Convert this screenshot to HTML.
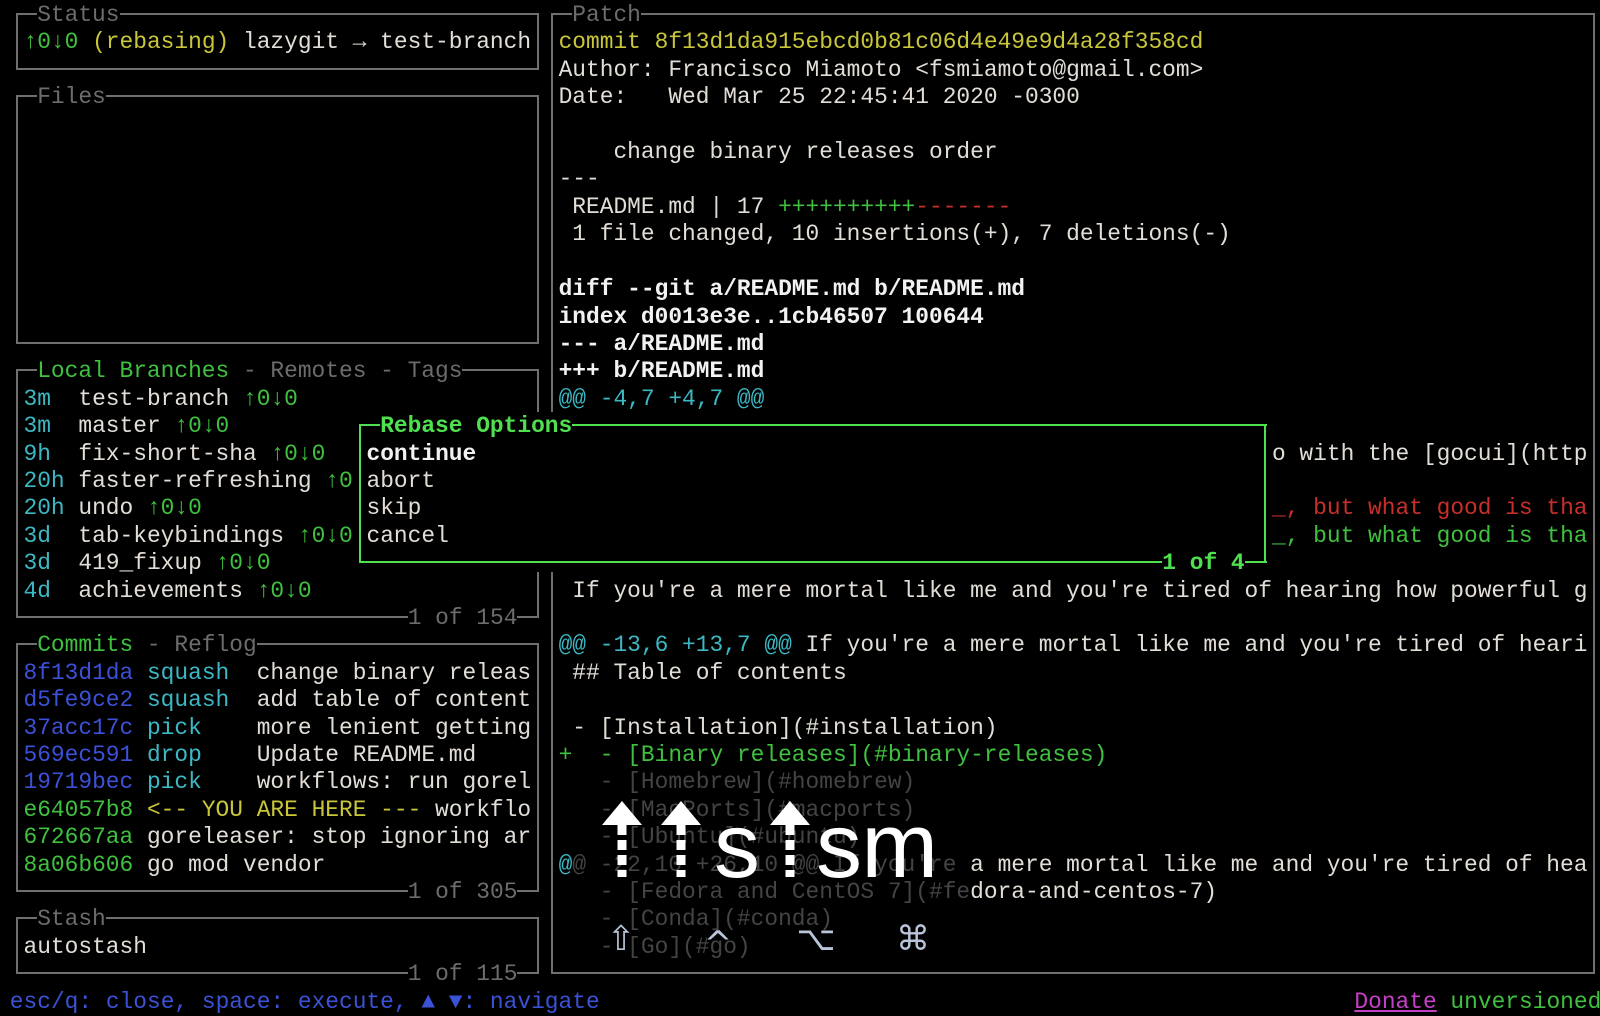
<!DOCTYPE html>
<html><head><meta charset="utf-8"><style>
html,body{margin:0;padding:0;background:#000;}
body{width:1600px;height:1014px;position:relative;overflow:hidden;}
.t{position:absolute;white-space:pre;font-family:"Liberation Mono","DejaVu Sans Mono",monospace;font-size:22.87px;line-height:27.4px;height:27.4px;color:#e2ddd6;margin-top:2px;}
.h{position:absolute;height:2px;background:#6f6f6f;}
.v{position:absolute;width:2px;background:#6f6f6f;}
.gh{position:absolute;height:2px;background:#4fe04f;}
.gv{position:absolute;width:2px;background:#4fe04f;}
.bk{background:#000;}
.g{color:#3fc03f}.y{color:#c9c63a}.c{color:#3cb8c4}.b{color:#3c50d8}.r{color:#c62f2a}
.d{color:#6c6c6c}.m{color:#c640c6;text-decoration:underline}.w{color:#f2f2f2}
.bd{font-weight:bold}.dim{color:#444}.gb{color:#4fe04f;font-weight:bold}
</style></head><body>

<!-- Status box -->
<div class="h" style="left:16px;top:13px;width:523px"></div>
<div class="h" style="left:16px;top:68px;width:523px"></div>
<div class="v" style="left:16px;top:13px;height:57px"></div>
<div class="v" style="left:537px;top:13px;height:57px"></div>
<!-- Files -->
<div class="h" style="left:16px;top:95px;width:523px"></div>
<div class="h" style="left:16px;top:342px;width:523px"></div>
<div class="v" style="left:16px;top:95px;height:249px"></div>
<div class="v" style="left:537px;top:95px;height:249px"></div>
<!-- Branches -->
<div class="h" style="left:16px;top:369px;width:523px"></div>
<div class="h" style="left:16px;top:616px;width:523px"></div>
<div class="v" style="left:16px;top:369px;height:249px"></div>
<div class="v" style="left:537px;top:369px;height:249px"></div>
<!-- Commits -->
<div class="h" style="left:16px;top:643px;width:523px"></div>
<div class="h" style="left:16px;top:890px;width:523px"></div>
<div class="v" style="left:16px;top:643px;height:249px"></div>
<div class="v" style="left:537px;top:643px;height:249px"></div>
<!-- Stash -->
<div class="h" style="left:16px;top:917px;width:523px"></div>
<div class="h" style="left:16px;top:972px;width:523px"></div>
<div class="v" style="left:16px;top:917px;height:57px"></div>
<div class="v" style="left:537px;top:917px;height:57px"></div>
<!-- Patch -->
<div class="h" style="left:551px;top:13px;width:1044px"></div>
<div class="h" style="left:551px;top:972px;width:1044px"></div>
<div class="v" style="left:551px;top:13px;height:961px"></div>
<div class="v" style="left:1593px;top:13px;height:961px"></div>

<!-- titles -->
<div class="t d bk" style="top:0;left:37.2px">Status</div>
<div class="t d bk" style="top:82.2px;left:37.2px">Files</div>
<div class="t bk" style="top:356.3px;left:37.2px"><span class="g">Local Branches</span><span class="d"> - Remotes - Tags</span></div>
<div class="t d bk" style="top:602.9px;left:407.7px">1 of 154</div>
<div class="t bk" style="top:630.3px;left:37.2px"><span class="g">Commits</span><span class="d"> - Reflog</span></div>
<div class="t d bk" style="top:877px;left:407.7px">1 of 305</div>
<div class="t d bk" style="top:904.4px;left:37.2px">Stash</div>
<div class="t d bk" style="top:959.2px;left:407.7px">1 of 115</div>
<div class="t d bk" style="top:0;left:572.3px">Patch</div>

<!-- status -->
<div class="t" style="top:27.4px;left:23.5px"><span class="g">↑0↓0</span><span class="y"> (rebasing)</span> lazygit → test-branch</div>

<!-- branches -->
<div class="t" style="top:383.7px;left:23.5px"><span class="c">3m</span>  test-branch <span class="g">↑0↓0</span></div>
<div class="t" style="top:411.1px;left:23.5px"><span class="c">3m</span>  master <span class="g">↑0↓0</span></div>
<div class="t" style="top:438.5px;left:23.5px"><span class="c">9h</span>  fix-short-sha <span class="g">↑0↓0</span></div>
<div class="t" style="top:465.9px;left:23.5px"><span class="c">20h</span> faster-refreshing <span class="g">↑0</span></div>
<div class="t" style="top:493.3px;left:23.5px"><span class="c">20h</span> undo <span class="g">↑0↓0</span></div>
<div class="t" style="top:520.7px;left:23.5px"><span class="c">3d</span>  tab-keybindings <span class="g">↑0↓0</span></div>
<div class="t" style="top:548.1px;left:23.5px"><span class="c">3d</span>  419_fixup <span class="g">↑0↓0</span></div>
<div class="t" style="top:575.5px;left:23.5px"><span class="c">4d</span>  achievements <span class="g">↑0↓0</span></div>

<!-- commits -->
<div class="t" style="top:657.7px;left:23.5px"><span class="b">8f13d1da</span> <span class="c">squash</span>  change binary releas</div>
<div class="t" style="top:685.1px;left:23.5px"><span class="b">d5fe9ce2</span> <span class="c">squash</span>  add table of content</div>
<div class="t" style="top:712.5px;left:23.5px"><span class="b">37acc17c</span> <span class="c">pick</span>    more lenient getting</div>
<div class="t" style="top:739.9px;left:23.5px"><span class="b">569ec591</span> <span class="c">drop</span>    Update README.md</div>
<div class="t" style="top:767.3px;left:23.5px"><span class="b">19719bec</span> <span class="c">pick</span>    workflows: run gorel</div>
<div class="t" style="top:794.7px;left:23.5px"><span class="g">e64057b8</span> <span class="y">&lt;-- YOU ARE HERE ---</span> workflo</div>
<div class="t" style="top:822.2px;left:23.5px"><span class="g">672667aa</span> goreleaser: stop ignoring ar</div>
<div class="t" style="top:849.6px;left:23.5px"><span class="g">8a06b606</span> go mod vendor</div>
<div class="t" style="top:931.8px;left:23.5px">autostash</div>

<!-- patch -->
<div class="t y" style="top:27.4px;left:558.6px">commit 8f13d1da915ebcd0b81c06d4e49e9d4a28f358cd</div>
<div class="t" style="top:54.8px;left:558.6px">Author: Francisco Miamoto &lt;fsmiamoto@gmail.com&gt;</div>
<div class="t" style="top:82.2px;left:558.6px">Date:   Wed Mar 25 22:45:41 2020 -0300</div>
<div class="t" style="top:137px;left:558.6px">    change binary releases order</div>
<div class="t" style="top:164.4px;left:558.6px">---</div>
<div class="t" style="top:191.8px;left:558.6px"> README.md | 17 <span class="g">++++++++++</span><span class="r">-------</span></div>
<div class="t" style="top:219.2px;left:558.6px"> 1 file changed, 10 insertions(+), 7 deletions(-)</div>
<div class="t w bd" style="top:274.1px;left:558.6px">diff --git a/README.md b/README.md</div>
<div class="t w bd" style="top:301.5px;left:558.6px">index d0013e3e..1cb46507 100644</div>
<div class="t w bd" style="top:328.9px;left:558.6px">--- a/README.md</div>
<div class="t w bd" style="top:356.3px;left:558.6px">+++ b/README.md</div>
<div class="t c" style="top:383.7px;left:558.6px">@@ -4,7 +4,7 @@</div>
<div class="t" style="top:438.5px;left:1272px">o with the [gocui](http</div>
<div class="t r" style="top:493.3px;left:1272px">_, but what good is tha</div>
<div class="t g" style="top:520.7px;left:1272px">_, but what good is tha</div>
<div class="t" style="top:575.5px;left:558.6px"> If you're a mere mortal like me and you're tired of hearing how powerful g</div>
<div class="t" style="top:630.3px;left:558.6px"><span class="c">@@ -13,6 +13,7 @@</span> If you're a mere mortal like me and you're tired of heari</div>
<div class="t" style="top:657.7px;left:558.6px"> ## Table of contents</div>
<div class="t" style="top:712.5px;left:558.6px"> - [Installation](#installation)</div>
<div class="t g" style="top:739.9px;left:558.6px">+  - [Binary releases](#binary-releases)</div>
<div class="t dim" style="top:767.3px;left:558.6px">   - [Homebrew](#homebrew)</div>
<div class="t dim" style="top:794.7px;left:558.6px">   - [MacPorts](#macports)</div>
<div class="t dim" style="top:822.2px;left:558.6px">   - [Ubuntu](#ubuntu)</div>
<div class="t" style="top:849.6px;left:558.6px"><span class="c">@</span><span class="dim">@ -22,10 +26,10 @@ If you're </span>a mere mortal like me and you're tired of hea</div>
<div class="t" style="top:877px;left:558.6px"><span class="dim">   - [Fedora and CentOS 7](#fe</span>dora-and-centos-7)</div>
<div class="t dim" style="top:904.4px;left:558.6px">   - [Conda](#conda)</div>
<div class="t dim" style="top:931.8px;left:558.6px">   - [Go](#go)</div>

<!-- popup -->
<div style="position:absolute;left:352px;top:412px;width:920px;height:160px;background:#000"></div>
<div class="gh" style="left:359px;top:424px;width:908px"></div>
<div class="gh" style="left:359px;top:561px;width:908px"></div>
<div class="gv" style="left:359px;top:424px;height:139px"></div>
<div class="gv" style="left:1264px;top:424px;height:139px"></div>
<div class="t gb bk" style="top:411.1px;left:380.2px">Rebase Options</div>
<div class="t w bd" style="top:438.5px;left:366.5px">continue</div>
<div class="t" style="top:465.9px;left:366.5px">abort</div>
<div class="t" style="top:493.3px;left:366.5px">skip</div>
<div class="t" style="top:520.7px;left:366.5px">cancel</div>
<div class="t gb bk" style="top:548.1px;left:1162.3px">1 of 4</div>

<!-- status bar -->
<div class="t" style="top:986.6px;left:9.8px;color:#3b52d6">esc/q: close, space: execute, ▲ ▼: navigate</div>
<div class="t" style="top:986.6px;left:1354.4px"><span class="m">Donate</span><span class="g"> unversioned</span></div>

<!-- keystroke overlay -->
<svg style="position:absolute;left:0;top:0" width="1600" height="1014">
<g fill="#fff">
<polygon points="602,825 622,801 642,825"/>
<polygon points="661,825 681,801 701,825"/>
<polygon points="770,825 790,801 810,825"/>
</g>
<g stroke="#fff" stroke-width="9" stroke-dasharray="10,5">
<line x1="622" y1="825" x2="622" y2="877"/>
<line x1="681" y1="825" x2="681" y2="877"/>
<line x1="790" y1="825" x2="790" y2="877"/>
</g>
<text x="714" y="877" font-family="Liberation Sans,sans-serif" font-size="92" fill="#fff">s</text>
<text x="816" y="877" font-family="Liberation Sans,sans-serif" font-size="92" fill="#fff" textLength="122">sm</text>
<g font-family="DejaVu Sans,sans-serif" font-size="34" fill="#b9c4d8" text-anchor="middle">
<text x="621" y="950">⇧</text>
<text x="718" y="955">^</text>
<text x="816" y="950">⌥</text>
<text x="913" y="950">⌘</text>
</g>
</svg>
</body></html>
